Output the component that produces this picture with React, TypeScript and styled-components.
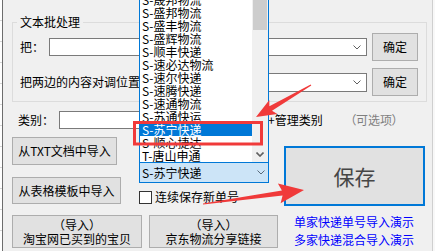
import React from 'react';
import styled, { createGlobalStyle } from 'styled-components';

const GlobalStyle = createGlobalStyle`
  html, body {
    margin: 0;
    padding: 0;
    background: #f0f0f0;
  }
  body {
    font-family: "Noto Sans CJK SC", "Noto Sans", sans-serif;
    font-size: 12px;
    color: #000;
  }
`;

const Window = styled.div`
  position: relative;
  display: flex;
  width: 435px;
  height: 251px;
  overflow: hidden;
  background: #f0f0f0;
`;

const LeftEdge = styled.div`
  flex: none;
  width: 2px;
  background: repeating-linear-gradient(to bottom, #fff 0, #fff 20px, #d6d6d6 20px, #d6d6d6 21px);
  border-right: 1px solid #6d6d6d;
`;

const RightEdge = styled.div`
  flex: none;
  width: 2px;
  background: #f8f8f8;
  border-left: 1px solid #cfcfcf;
`;

const Main = styled.div`
  flex: 1;
  display: flex;
  flex-direction: column;
  align-items: flex-start;
  padding-left: 9px;
`;

const GroupBox = styled.fieldset`
  box-sizing: border-box;
  width: 415px;
  min-width: 0;
  margin: 14px 0 0 0;
  padding: 0 8px 5px 4px;
  border: 1px solid #dcdcdc;
`;

const Legend = styled.legend`
  padding: 0 3px;
  font-size: 12px;
  line-height: 16px;
`;

const FieldRow = styled.div<{ $top: number }>`
  display: flex;
  align-items: center;
  gap: 5px;
  height: 28px;
  margin: ${p => p.$top}px 0 0 3px;
`;

const Label = styled.span<{ $w: number }>`
  flex: none;
  width: ${p => p.$w}px;
  font-size: 12px;
  line-height: 16px;
  white-space: nowrap;
`;

const RowLabel = styled(Label)`
  margin-right: -5px;
`;

const Combo = styled.div<{ $h: number; $active?: boolean }>`
  flex: 1;
  box-sizing: border-box;
  height: ${p => p.$h}px;
  display: flex;
  align-items: center;
  justify-content: space-between;
  padding: 0 ${p => (p.$active ? 3 : 5)}px 0 2px;
  background: ${p => (p.$active ? '#cce4f7' : '#fff')};
  border: 1px solid ${p => (p.$active ? '#0078d7' : '#7a7a7a')};
  font-size: 12px;
  line-height: 14px;
  white-space: nowrap;
`;

const Button = styled.button<{ $w: number; $h: number }>`
  flex: none;
  box-sizing: border-box;
  width: ${p => p.$w}px;
  height: ${p => p.$h}px;
  margin: 0;
  padding: 0;
  background: #e1e1e1;
  border: 1px solid #adadad;
  border-radius: 0;
  font-family: "Noto Sans CJK SC", "Noto Sans", sans-serif;
  font-size: 12px;
  line-height: 14px;
  color: #000;
  white-space: nowrap;
`;

const SaveButton = styled(Button)`
  margin-top: 9px;
  border: 2px solid #0078d7;
  font-size: 21px;
  line-height: 24px;
  color: #464646;
`;

const CategoryRow = styled.div`
  display: flex;
  align-items: center;
  height: 18px;
  margin-top: 9px;
  padding-left: 6px;
`;

const TextInput = styled.div`
  flex: none;
  box-sizing: border-box;
  width: 201px;
  height: 18px;
  background: #fff;
  border: 1px solid #7a7a7a;
`;

const ManageText = styled.span`
  width: 82px;
  margin-left: 8px;
  font-size: 12px;
  line-height: 16px;
  white-space: nowrap;
`;

const Optional = styled.span`
  font-size: 12px;
  line-height: 16px;
  color: #7f7f7f;
  font-feature-settings: "palt";
  white-space: nowrap;
`;

const Lower = styled.div`
  display: flex;
  margin-top: 8px;
`;

const LeftArea = styled.div`
  display: flex;
  flex-direction: column;
  width: 266px;
`;

const TopPart = styled.div`
  display: flex;
`;

const ButtonColumn = styled.div`
  display: flex;
  flex-direction: column;
  gap: 12px;
  width: 109px;
`;

const MiddleColumn = styled.div`
  display: flex;
  flex-direction: column;
  width: 130px;
  margin-left: 18px;
`;

const ComboWrap = styled.div`
  position: relative;
  display: flex;
  height: 21px;
  margin-top: 25px;
`;

const Popup = styled.div`
  position: absolute;
  left: 0;
  bottom: 100%;
  display: flex;
  width: 128px;
  height: 169px;
  background: #fff;
  border: 1px solid #0078d7;
  border-bottom: 0;
  z-index: 2;
`;

const ItemList = styled.div`
  flex: 1;
  display: flex;
  flex-direction: column;
  justify-content: flex-end;
  overflow: hidden;
`;

const Item = styled.div<{ $selected?: boolean }>`
  flex: none;
  height: 13px;
  padding-left: 2px;
  font-size: 12px;
  line-height: 13px;
  white-space: nowrap;
  background: ${p => (p.$selected ? '#0078d7' : 'transparent')};
  color: ${p => (p.$selected ? '#fff' : '#000')};
`;

const ScrollBar = styled.div`
  flex: none;
  display: flex;
  flex-direction: column;
  justify-content: space-between;
  width: 16px;
  background: #f0f0f0;
`;

const Thumb = styled.div`
  width: 14px;
  height: 37px;
  margin-left: 1px;
  background: #cdcdcd;
`;

const ScrollArrow = styled.div`
  display: flex;
  align-items: center;
  justify-content: center;
  height: 16px;
`;

const CheckRow = styled.label`
  display: flex;
  align-items: center;
  gap: 3px;
  height: 16px;
  margin-top: 6px;
  font-size: 12px;
  line-height: 16px;
  white-space: nowrap;
`;

const CheckBox = styled.span`
  flex: none;
  box-sizing: border-box;
  width: 13px;
  height: 13px;
  background: #fff;
  border: 1px solid #333;
`;

const BottomRow = styled.div`
  display: flex;
  gap: 7px;
  margin-top: 10px;
`;

const RightArea = styled.div`
  display: flex;
  flex-direction: column;
  width: 141px;
  margin-left: 6px;
`;

const Links = styled.div`
  display: flex;
  flex-direction: column;
  margin-top: 7px;
  padding-left: 10px;
`;

const DemoLink = styled.a`
  font-size: 12px;
  line-height: 18px;
  color: #0000ff;
  text-decoration: none;
  white-space: nowrap;
`;

const Marks = styled.svg`
  position: absolute;
  left: 0;
  top: 0;
  pointer-events: none;
  z-index: 5;
`;

const Chevron = ({ color = '#606060', bold }: { color?: string; bold?: boolean }) => (
  <svg width="8" height="5" viewBox="0 0 8 5">
    <path d="M0.5 0.5 L4 4 L7.5 0.5" fill="none" stroke={color} strokeWidth={bold ? 1.6 : 1} />
  </svg>
);

// tapered arrow, the way screenshot tools draw it
const arrowPoints = (x1: number, y1: number, x2: number, y2: number, head: number, half: number) => {
  const len = Math.hypot(x2 - x1, y2 - y1);
  const ux = (x2 - x1) / len;
  const uy = (y2 - y1) / len;
  const nx = -uy;
  const ny = ux;
  const bx = x2 - ux * head;
  const by = y2 - uy * head;
  const wx = bx - ux * 3;
  const wy = by - uy * 3;
  const pts = [
    [x1 + nx * 0.6, y1 + ny * 0.6],
    [bx + nx * 2.6, by + ny * 2.6],
    [wx + nx * half, wy + ny * half],
    [x2, y2],
    [wx - nx * half, wy - ny * half],
    [bx - nx * 2.6, by - ny * 2.6],
    [x1 - nx * 0.6, y1 - ny * 0.6],
  ];
  return pts.map(p => `${p[0].toFixed(1)},${p[1].toFixed(1)}`).join(' ');
};

const couriers = [
  'S-晟邦物流',
  'S-盛邦物流',
  'S-盛丰物流',
  'S-盛辉物流',
  'S-顺丰快递',
  'S-速必达物流',
  'S-速尔快递',
  'S-速腾快递',
  'S-速通物流',
  'S-苏通快运',
  'S-苏宁快递',
  'S-顺心捷达',
  'T-唐山申通',
];

const App: React.FC = () => {
  const selected = 'S-苏宁快递';
  const red = '#f03a3a';

  return (
    <Window>
      <GlobalStyle />
      <LeftEdge />
      <Main>
        <GroupBox>
          <Legend>文本批处理</Legend>
          <FieldRow $top={3}>
            <RowLabel $w={29}>把：</RowLabel>
            <Combo $h={18}>
              <span />
              <Chevron />
            </Combo>
            <Button $w={46} $h={28}>确定</Button>
          </FieldRow>
          <FieldRow $top={7}>
            <RowLabel $w={131}>把两边的内容对调位置</RowLabel>
            <Combo $h={19}>
              <span />
              <Chevron />
            </Combo>
            <Button $w={46} $h={28}>确定</Button>
          </FieldRow>
        </GroupBox>

        <CategoryRow>
          <Label $w={41}>类别：</Label>
          <TextInput />
          <ManageText>+管理类别</ManageText>
          <Optional>（可选项）</Optional>
        </CategoryRow>

        <Lower>
          <LeftArea>
            <TopPart>
              <ButtonColumn>
                <Button $w={105} $h={28}>从TXT文档中导入</Button>
                <Button $w={109} $h={27}>从表格模板中导入</Button>
              </ButtonColumn>
              <MiddleColumn>
                <ComboWrap>
                  <Popup>
                    <ItemList>
                      {couriers.map(name => (
                        <Item key={name} $selected={name === selected}>{name}</Item>
                      ))}
                    </ItemList>
                    <ScrollBar>
                      <Thumb />
                      <ScrollArrow>
                        <Chevron color="#606060" bold />
                      </ScrollArrow>
                    </ScrollBar>
                  </Popup>
                  <Combo $h={21} $active>
                    <span>{selected}</span>
                    <Chevron color="#5a6a7a" />
                  </Combo>
                </ComboWrap>
                <CheckRow>
                  <CheckBox />
                  连续保存新单号
                </CheckRow>
              </MiddleColumn>
            </TopPart>
            <BottomRow>
              <Button $w={130} $h={33}>（导入）<br />淘宝网已买到的宝贝</Button>
              <Button $w={129} $h={33}>（导入）<br />京东物流分享链接</Button>
            </BottomRow>
          </LeftArea>

          <RightArea>
            <SaveButton $w={141} $h={60}>保存</SaveButton>
            <Links>
              <DemoLink>单家快递单号导入演示</DemoLink>
              <DemoLink>多家快递混合导入演示</DemoLink>
            </Links>
          </RightArea>
        </Lower>
      </Main>
      <RightEdge />

      <Marks width="435" height="251" viewBox="0 0 435 251">
        <rect x="134.5" y="122.5" width="127" height="21.5" fill="none" stroke={red} strokeWidth="3" />
        <polygon points={arrowPoints(311, 85, 256, 117, 17, 8)} fill={red} />
        <polygon points={arrowPoints(203, 204, 304, 190, 22, 10)} fill={red} />
      </Marks>
    </Window>
  );
};

export default App;
